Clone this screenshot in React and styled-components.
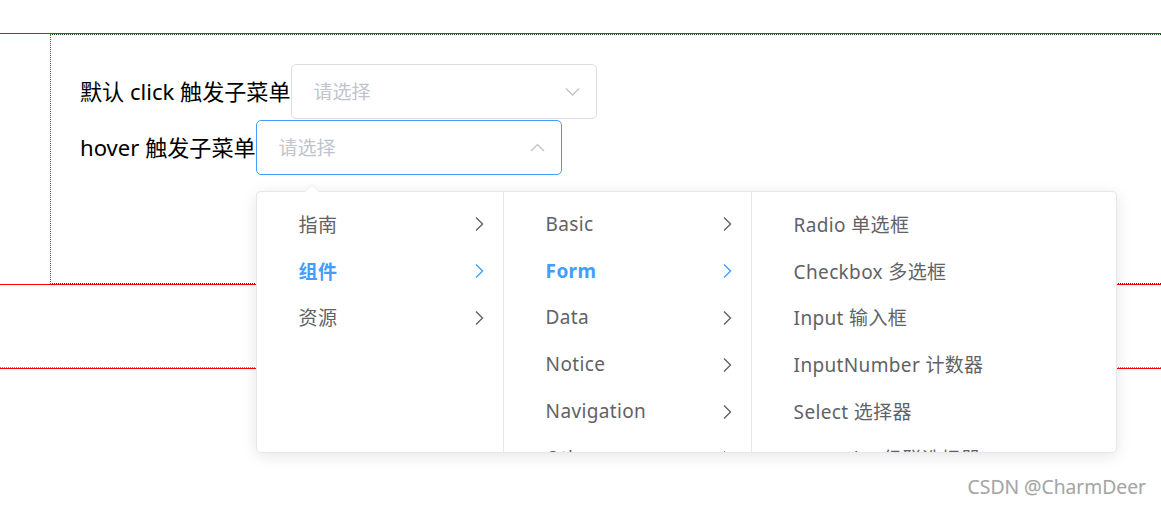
import React from "react";
import styled, { createGlobalStyle } from "styled-components";

const Global = createGlobalStyle`
  html, body { margin: 0; padding: 0; background: #fff; }
  body { font-family: "Noto Sans", "Noto Sans CJK SC", sans-serif; }
`;

const Page = styled.div`
  position: relative;
  width: 1161px;
  height: 505px;
  overflow: hidden;
  padding-top: 33px;
  box-sizing: border-box;
`;

const Rule = styled.div`
  height: 1px;
  background: #ff0000;
`;

const Frame = styled.div`
  margin-left: 50px;
  height: 250px;
  box-sizing: border-box;
  border-top: 1px dotted #0d4f0d;
  border-bottom: 1px dotted #0d4f0d;
  border-left: 1px dotted #0a8a0a;
  padding: 29px 0 0 29px;
  display: flex;
  flex-direction: column;
  gap: 1px;
`;

const Spacer = styled.div`
  height: 83px;
  box-sizing: border-box;
  border-bottom: 1px dotted #8a8a8a;
`;

const Row = styled.div`
  display: flex;
  align-items: center;
  height: 55px;
  position: relative;
`;

const Label = styled.span`
  font-size: 22.1px;
  color: #000;
  white-space: nowrap;
  padding-bottom: 4px;
`;

const Select = styled.div`
  position: relative;
  width: 306px;
  height: 55px;
  box-sizing: border-box;
  border: 1px solid ${(p) => (p.$active ? "#409eff" : "#dcdfe6")};
  border-radius: 5px;
  background: #fff;
  display: flex;
  align-items: center;
  justify-content: space-between;
  padding: 0 16px 0 22px;
`;

const Placeholder = styled.span`
  font-size: 19px;
  color: #c0c4cc;
  padding-bottom: 2px;
`;

const Dropdown = styled.div`
  position: absolute;
  top: 70px;
  left: -1px;
  z-index: 10;
  display: flex;
  height: 262px;
  box-sizing: border-box;
  border: 1px solid #e4e7ed;
  border-radius: 5px;
  background: #fff;
  box-shadow: 0 3px 16px 0 rgba(0, 0, 0, 0.1);
`;

const PopArrow = styled.div`
  position: absolute;
  top: -8px;
  left: 47px;
  width: 0;
  height: 0;
  border-left: 8px solid transparent;
  border-right: 8px solid transparent;
  border-bottom: 8px solid #e4e7ed;
  &::after {
    content: "";
    position: absolute;
    left: -7px;
    top: 1px;
    border-left: 7px solid transparent;
    border-right: 7px solid transparent;
    border-bottom: 7px solid #fff;
  }
`;

const Column = styled.ul`
  list-style: none;
  margin: 0;
  padding: 9px 0 0;
  width: ${(p) => p.$w}px;
  box-sizing: border-box;
  overflow: hidden;
  border-right: ${(p) => (p.$last ? "none" : "1px solid #e4e7ed")};
`;

const Item = styled.li`
  display: flex;
  align-items: center;
  height: 46.8px;
  padding: 0 19px 0 42px;
  font-size: 19px;
  letter-spacing: 0.35px;
  white-space: nowrap;
  color: ${(p) => (p.$active ? "#409eff" : "#606266")};
  font-weight: ${(p) => (p.$active ? 700 : 400)};
`;

const ItemText = styled.span`
  flex: 1;
  padding-bottom: 1px;
`;

const Watermark = styled.div`
  position: absolute;
  right: 15px;
  top: 473px;
  font-size: 19.4px;
  color: #a6a6a6;
  text-shadow: 0 0 1px rgba(0, 0, 0, 0.15);
  font-family: "Open Sans", "Noto Sans", sans-serif;
`;

const Chevron = ({ dir, color }) => {
  if (dir === "right") {
    return (
      <svg width="10" height="16" viewBox="0 0 10 16" fill="none">
        <path d="M2 1.5 L8.5 8 L2 14.5" stroke={color} strokeWidth="1.4" strokeLinejoin="miter" />
      </svg>
    );
  }
  const d = dir === "up" ? "M1 8 L7.5 1.5 L14 8" : "M1 1.5 L7.5 8 L14 1.5";
  return (
    <svg width="15" height="10" viewBox="0 0 15 10" fill="none">
      <path d={d} stroke={color} strokeWidth="1.4" />
    </svg>
  );
};

const col1 = ["指南", "组件", "资源"];
const col2 = ["Basic", "Form", "Data", "Notice", "Navigation", "Others"];
const col3 = [
  "Radio 单选框",
  "Checkbox 多选框",
  "Input 输入框",
  "InputNumber 计数器",
  "Select 选择器",
  "Cascader 级联选择器",
  "Switch 开关",
];

export default function App() {
  return (
    <>
      <Global />
      <Page>
        <Rule />
        <Frame>
          <Row>
            <Label>默认 click 触发子菜单</Label>
            <Select>
              <Placeholder>请选择</Placeholder>
              <Chevron dir="down" color="#c0c4cc" />
            </Select>
          </Row>
          <Row>
            <Label>hover 触发子菜单</Label>
            <Select $active>
              <Placeholder>请选择</Placeholder>
              <Chevron dir="up" color="#c0c4cc" />
              <Dropdown>
                <PopArrow />
                <Column $w={247}>
                  {col1.map((t, i) => (
                    <Item key={t} $active={i === 1}>
                      <ItemText>{t}</ItemText>
                      <Chevron dir="right" color={i === 1 ? "#409eff" : "#606266"} />
                    </Item>
                  ))}
                </Column>
                <Column $w={248}>
                  {col2.map((t, i) => (
                    <Item key={t} $active={i === 1}>
                      <ItemText>{t}</ItemText>
                      <Chevron dir="right" color={i === 1 ? "#409eff" : "#606266"} />
                    </Item>
                  ))}
                </Column>
                <Column $w={364} $last>
                  {col3.map((t) => (
                    <Item key={t}>
                      <ItemText>{t}</ItemText>
                    </Item>
                  ))}
                </Column>
              </Dropdown>
            </Select>
          </Row>
        </Frame>
        <Rule />
        <Spacer />
        <Rule />
        <Watermark>CSDN @CharmDeer</Watermark>
      </Page>
    </>
  );
}
